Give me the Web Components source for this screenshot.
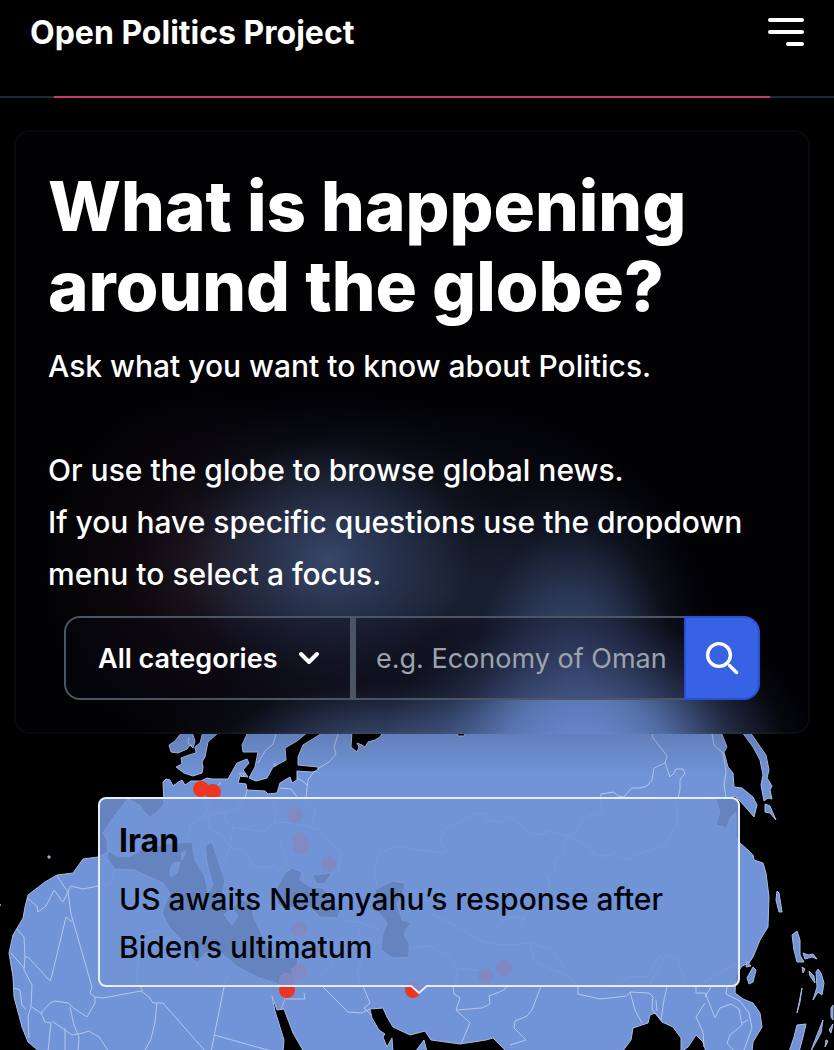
<!DOCTYPE html>
<html lang="en">
<head>
<meta charset="utf-8">
<meta name="viewport" content="width=device-width, initial-scale=1">
<title>Open Politics Project</title>
<style>
html{background:#000}
body{margin:0;background:#000;color:#fff;font-family:Inter,"Liberation Sans",sans-serif;overflow-x:hidden}
</style>
</head>
<body>
<politics-app></politics-app>
<script>
const define=(name,html)=>customElements.define(name,class extends HTMLElement{
  constructor(){super();this.attachShadow({mode:'open'}).innerHTML=html}
});

define('site-header',`
<style>
:host{display:block}
.bar{display:flex;justify-content:space-between;align-items:flex-start;height:84px;padding:12px 30px 0}
a{color:#fff;text-decoration:none;font-size:32px;line-height:42px;font-weight:700}
button{border:0;background:none;padding:6px 0 0;margin:0;display:block}
svg{display:block}
.rule{height:2px;background:#1f2937;padding:0 64px 0 54px}
.rule i{display:block;height:2px;background:#c93a6c}
</style>
<header><div class="bar"><a href="#"><slot></slot></a>
<button type="button" aria-label="Menu"><svg width="36" height="28" stroke="#fff" stroke-width="4" stroke-linecap="round"><path d="M2 2H34M2 14H34M20 26H34"/></svg></button></div>
<div class="rule"><i></i></div></header>`);

define('search-bar',`
<style>
:host{display:block}
form{display:flex;height:84px;margin:0}
.pick{position:relative;flex:0 0 288px;display:flex}
select,input,button{font-family:inherit;font-size:27px;box-sizing:border-box;margin:0;border:2px solid #4b5563;background:rgba(12,10,24,.35);color:#fff;outline:0;border-radius:0}
select{appearance:none;width:100%;padding:0 0 0 32px;font-weight:600;border-radius:16px 0 0 16px}
.pick svg{position:absolute;right:32px;top:34px;pointer-events:none}
input{flex:1;min-width:0;padding:0 0 0 20px;border-left-width:4px;border-right:0}
input::placeholder{color:#9ca3af;opacity:1}
button{flex:0 0 76px;padding:0;background:#3662e3;border-color:#2a4fd0;border-radius:0 16px 16px 0;display:grid;place-items:center}
</style>
<form onsubmit="return false">
<div class="pick"><select aria-label="Category"><option>All categories</option></select>
<svg width="22" height="16" fill="none" stroke="#fff" stroke-width="4" stroke-linecap="round" stroke-linejoin="round"><path d="M3 4L11 12L19 4"/></svg></div>
<input type="text" aria-label="Question" placeholder="e.g. Economy of Oman">
<button type="submit" aria-label="Search"><svg width="36" height="36" fill="none" stroke="#fff" stroke-width="3.4" stroke-linecap="round"><circle cx="15" cy="15" r="11.4"/><path d="M25.5 25.5L32.5 32.5"/></svg></button>
</form>`);

define('hero-card',`
<style>
:host{display:block;margin:32px 24px 0 14px;padding:34px 32px 32px;border:2px solid rgba(148,163,184,.05);border-radius:16px;
background:
radial-gradient(ellipse 230px 150px at 570px 620px,rgba(112,145,218,.95),rgba(102,135,203,.78) 35%,rgba(75,98,152,.4) 65%,rgba(40,52,84,.1) 88%,transparent),
radial-gradient(ellipse 150px 220px at 560px 540px,rgba(86,113,172,.72),rgba(72,96,148,.5) 35%,rgba(45,60,95,.2) 65%,rgba(30,40,60,.04) 88%,transparent),
radial-gradient(ellipse 240px 110px at 370px 630px,rgba(78,99,150,.9),rgba(60,77,118,.6) 40%,rgba(35,45,70,.2) 70%,transparent),
radial-gradient(ellipse 210px 180px at 315px 430px,rgba(62,80,120,.85),rgba(50,65,98,.6) 35%,rgba(28,36,56,.22) 68%,rgba(15,20,32,.06) 88%,transparent),
radial-gradient(ellipse 170px 180px at 195px 440px,rgba(70,40,52,.4),rgba(45,26,36,.22) 50%,transparent),
radial-gradient(ellipse 250px 190px at 430px 460px,rgba(30,37,56,.8),rgba(20,25,38,.45) 50%,transparent),
#020205;
background-origin:border-box;background-repeat:no-repeat}
h1{margin:0 0 14px;font-size:69px;line-height:80px;font-weight:800}
p{margin:0;font-size:30px;line-height:52px;font-weight:500}
search-bar{margin:16px 16px 0}
</style>
<h1><slot name="title"></slot></h1>
<p>Ask what you want to know about Politics.<br><br>Or use the globe to browse global news.<br>If you have specific questions use the dropdown menu to select a focus.</p>
<search-bar></search-bar>`);

define('news-tooltip',`
<style>
:host{display:block;box-sizing:border-box;border:2px solid #e9edf7;border-radius:8px;background:rgba(113,148,214,.89);color:#020308;padding:18px 20px 14px 19px}
h2{margin:0 0 10px;font-size:32px;line-height:48px;font-weight:700}
p{margin:0;font-size:30px;line-height:48px;font-weight:450}
svg{position:absolute;left:50%;bottom:-10px;margin-left:-9px}
</style>
<h2><slot name="place"></slot></h2><p><slot></slot></p>
<svg width="18" height="10"><path d="M0 0H18L9 9Z" fill="#7f8fcb"/><path d="M0 0L9 8L18 0" fill="none" stroke="#e9edf7" stroke-width="2"/></svg>`);

define('globe-map',`
<style>
:host{display:block;position:relative}
svg{display:block;width:100%}
.land{fill:#7194d8;stroke:#a9bbdd;stroke-width:1}
.sea{fill:#000;stroke:#a9bbdd;stroke-width:1}
.line{fill:none;stroke:#b5c6ea;stroke-width:1;stroke-linejoin:round}
.dots{fill:#ee3524}
::slotted(*){position:absolute;left:98px;right:94px;top:63px}
</style>
<svg viewBox="0 734 834 316" role="img" aria-label="Globe">
<defs><linearGradient id="s" x1="0" y1="0" x2="0" y2="1"><stop stop-color="#000" stop-opacity=".14"/><stop offset="1" stop-color="#000" stop-opacity="0"/></linearGradient></defs>
<g class="land">
<path d="M182 732L178 737L175 741L169 745L171 752L178 753L187 749L190 745L193 748L195 741L192 732Z"/>
<path d="M203 732L200 743L195 747L196 753L189 755L181 758L182 764L176 767L184 773L193 776L202 773L203 767L202 762L205 757L208 742L219 732Z"/>
<path d="M248 732L242 745L243 752L258 752L255 767L249 778L256 781L267 778L273 767L286 760L285 748L297 741L308 732Z"/>
<path d="M163 782L166 779L170 780L173 786L177 783L182 780L185 785L191 781L201 781L207 778L212 779L222 779L228 779L233 770L237 763L247 759L249 763L243 770L248 777L240 776L238 783L246 784L247 790L265 791L268 794L277 793L280 783L290 777L292 783L297 780L297 771L312 772L318 771L318 767L298 765L298 757L303 745L324 732H721L727 747L724 752L728 767L733 773L734 787L742 788L753 797L757 805L754 817L748 810L740 801L735 796L728 798L716 799L720 812L716 825L727 828L730 818L736 812L736 838L740 843L748 850L753 855L754 860L763 863L766 873L769 897L768 927L760 940L753 957L749 963L742 966L736 975L735 993L743 999L753 1003L760 1013L762 1027L753 1042L752 1052H706L703 1042L696 1035L688 1047L681 1052V1038L673 1027L662 1022L655 1013L650 1015L648 1023L633 1028L631 1040L622 1052H40L28 1042L22 1027L14 997L13 977L9 953L13 935L23 918L25 907L28 895L45 882L57 875L73 873L83 859L98 857L108 852L107 840L103 833L115 815L128 799L133 802L140 805L145 813L150 817L157 812L164 804Z"/>
<path d="M742 732L753 747L760 760L763 775L761 785L764 801L768 798L772 799L770 790L772 786L767 778L769 770L766 755L750 732Z"/>
<path d="M765 804L770 806L776 820L770 813L765 812Z"/>
<path d="M777 891L779 893L782 912L779 912L776 900ZM753 967L756 970L753 982L749 984L747 978ZM747 961L751 966L746 967ZM792 935L797 931L800 940L800 955L804 962L797 962L794 950ZM816 972L818 969L821 973L824 983L822 995L818 992L813 1000L817 987ZM803 953L808 955L813 954L817 959L812 957L805 959ZM802 967L805 969L803 973ZM809 971L814 976L815 983L810 976ZM802 988L800 1002L797 1013L800 998ZM797 1025L806 1024L803 1037L799 1052H789L794 1037ZM823 1020L821 1033L811 1051L815 1040ZM831 1008L833 1005V1020L831 1017ZM829 1030L833 1024L831 1033ZM826 1040L828 1041L825 1047ZM48 856H50V858H48ZM0 904V906Z"/>
</g>
<g class="sea">
<path d="M352 732L351 747L357 752L359 747L357 743L362 745L365 747L368 742L375 740L380 737L383 732ZM457 732L458 736H464L466 732Z"/>
<path d="M108 851L118 856L130 857L140 850L150 850L160 845L172 843L192 842L195 860L205 877L208 893L213 885L207 863L205 845L212 842L217 857L225 880L223 893L225 903L230 912L240 899L253 903L253 915L260 930L268 948L275 958L297 957L298 975L288 988L275 983L257 977L238 967L220 952L205 953L198 962L193 960L188 947L170 928L162 913L167 900L170 893L163 883L150 877L135 870L115 869L107 860Z"/>
<path d="M277 887L285 873L292 868L302 872L300 880L310 887L323 888L340 910L338 918L320 917L310 907L283 908L277 903ZM312 875L332 873L325 883L317 884Z"/>
<path d="M375 890L392 881L405 883L403 893L397 903L402 920L412 923L407 928L404 935L409 943V957L393 958L381 950L382 937L387 923L377 910Z"/>
<path d="M272 996L277 1010L284 1009L293 1033L304 1052H283L284 1040L275 1011ZM285 998L281 1010"/>
<path d="M370 1009L383 1008L387 1017L393 1027L410 1035L425 1031L431 1040L460 1044L486 1040L493 1038L507 1052H427L424 1040L415 1052H393L392 1038L387 1047L383 1037L385 1034L379 1030L372 1018Z"/>
</g>
<g class="land"><path d="M170 870L173 863L180 862L177 873L171 877ZM181 853L186 851L182 860ZM224 915L232 908L238 916L232 925Z"/><path d="M274 763L277 765L274 767ZM239 773L245 774L242 777Z"/></g>
<g class="line">
<path d="M276 734L273 744L265 751L258 763M338 734L334 747L336 754L329 762L319 768L313 773L308 780L306 798M297 778L304 782L308 786M280 788L291 789L298 798M201 783L204 790L202 798M214 791L221 782M247 790L245 798M189 737L188 743L192 746"/>
<path d="M652 734L653 738L661 748L667 756L665 763L670 777L674 773L676 769L683 769L685 773L680 780L680 790L678 798M665 763L654 768L652 780L647 786L640 788L632 788L628 792L624 797L618 796L614 792L601 794L600 804L604 810L598 814L590 815L582 820L575 833L567 836L560 834L550 831L542 834L533 835L508 815L501 822L487 820L485 813L475 813L465 819L444 829L440 842L447 850L442 853L430 851M567 836L580 841L591 849L595 856L606 856L615 853L626 860L637 855L650 850L662 847L670 836L677 825L677 807L673 803L678 798M567 836L564 843L565 855L556 857L555 872L547 876L551 891L542 905L527 912L520 926M712 734L714 745L723 753L725 764L726 773L724 785L726 797"/>
<path d="M57 876L68 892L63 902L54 890L46 906L38 912L37 906L27 898M68 892L71 886L83 889L98 886M68 892L71 914L92 987L90 993L95 997L103 998L119 995L141 991L149 997L153 1003H163L206 1052M72 922L66 917L52 975L50 981L28 957L25 957L24 970L32 985L31 1007L28 1016L29 1038M17 929L24 937L25 957M11 953L24 968M14 988L20 990L22 1005L26 1010M32 1007L41 1013L50 1003L55 1001L68 1003L75 1009L87 1017L95 1003V997M41 1013L45 1022L51 1023L50 1032L48 1052M52 1021L72 1035L83 1033L89 1031L99 1037L109 1052M70 1007L74 1025L79 1037L78 1052M65 1028V1052M157 1003L155 1022L151 1039L144 1052M143 991L137 982V971L142 935M224 987L211 1052M214 1035L275 1052M108 859L115 871L110 885L102 884M145 890L151 915M224 987L228 974"/>
<path d="M286 999L305 999L304 993M322 986L348 1012L361 1013L370 1009M363 986L370 1003L364 1008L371 1015M453 986L454 994L460 998L456 1010L470 1023L461 1044M456 1010L482 1008L490 1004L489 996L502 991L507 987M541 986L532 1010L527 1016L515 1021L514 1028L526 1040L510 1045M578 987V994L600 999L627 996L630 992L649 993L653 997L652 1009L661 1020L664 1000L667 987M630 992L635 1010L642 1023M656 1000L657 1011M696 987V993L705 993L708 1000L715 1018L720 1008L731 1004L739 1009L742 1025L730 1035L727 1043L735 1052M705 1003L696 1017L703 1032L704 1047M727 987L726 994L740 1001L749 1013L752 1028L744 1050M742 1023L748 1020M711 987L705 997"/>
<path d="M190 826L197 820L210 815L225 812L237 808L246 796M202 798L209 805L202 818M225 812L224 820L233 828L246 829L259 824M190 826L188 838M210 815L208 828L222 835L230 847L245 850M233 828L230 847L225 860M245 850L253 867L275 867M246 829L263 832L275 822L292 823L306 826L320 830L330 842L341 852L338 872M275 822L276 808L268 797M306 798L315 808L313 824M280 840L287 862L277 872M377 888L374 870L380 852L399 846L419 850L430 851M380 930L360 922L345 921M409 948L430 946L446 954L458 968L488 972M458 968L455 987M430 913L458 927L483 942L507 945L530 943M493 928L512 916L526 920M530 943L534 960L548 968L567 975L578 985M530 943L552 950L566 970M618 985L627 977L648 976L658 957L668 955L678 960L686 985M648 987L666 955M700 985L725 970L735 964M330 946L332 965L318 976M358 930L365 946L357 974L361 987M160 930L140 935"/>
</g>
<g class="dots"><circle cx="201" cy="789" r="8"/><circle cx="213" cy="792" r="8"/><circle cx="295" cy="815" r="8"/><circle cx="300" cy="840" r="8"/><circle cx="301" cy="846" r="8"/><circle cx="329" cy="864" r="8"/><circle cx="299" cy="929" r="8"/><circle cx="320" cy="952" r="6"/><circle cx="299" cy="972" r="8"/><circle cx="287" cy="981" r="8"/><circle cx="287" cy="990" r="8"/><circle cx="413" cy="990" r="8"/><circle cx="486" cy="976" r="8"/><circle cx="504" cy="968" r="8"/></g>
<rect y="734" width="834" height="42" fill="url(#s)"/>
</svg>
<slot></slot>`);

define('politics-app',`
<style>:host{display:block}</style>
<site-header>Open Politics Project</site-header>
<main>
<hero-card><span slot="title">What is happening around the globe?</span></hero-card>
<globe-map><news-tooltip><span slot="place">Iran</span>US awaits Netanyahu’s response after Biden’s ultimatum</news-tooltip></globe-map>
</main>`);
</script>
</body>
</html>
